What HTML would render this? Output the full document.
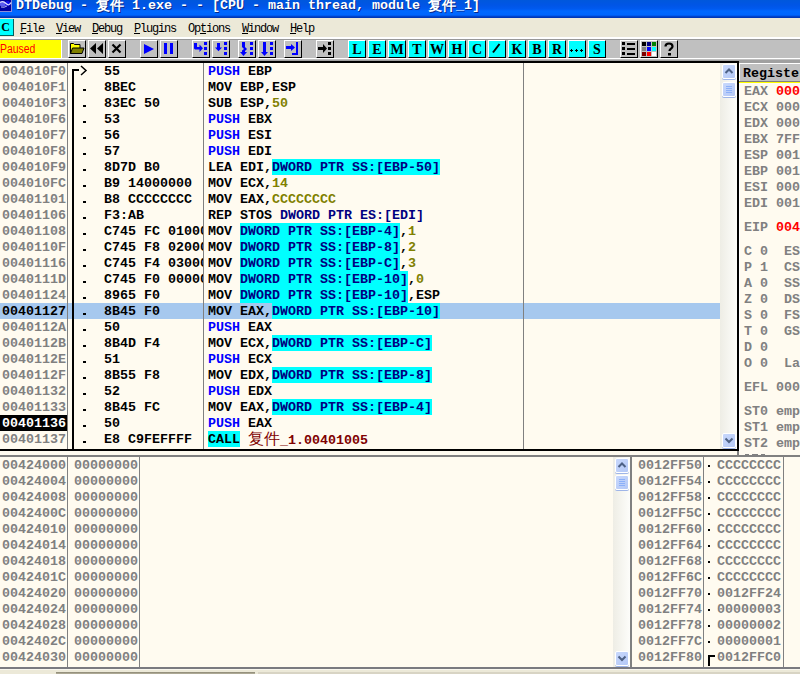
<!DOCTYPE html><html><head><meta charset="utf-8"><style>
*{margin:0;padding:0;box-sizing:border-box}
html,body{width:800px;height:674px;overflow:hidden;background:#ECE9D8;position:relative}
body div{position:absolute}
.m{font-family:"Liberation Mono",monospace;font-weight:bold;font-size:13.333px;line-height:18px;white-space:pre;height:16px}
.t{font-family:"Liberation Mono",monospace;font-weight:bold;font-size:13.333px;line-height:16px;white-space:pre;color:#fff;text-shadow:1px 1px 0 #0A2A8A}
.mn{font-family:"Liberation Mono",monospace;font-size:12px;letter-spacing:-1.2px;line-height:18px;white-space:pre;color:#000}
.btn{width:18px;height:18px;background:#C0C0C0;border-left:1px solid #fff;border-top:1px solid #fff;border-right:1px solid #000;border-bottom:1px solid #000}
.cb{width:18px;height:18px;background:#00FFFF;border-left:1px solid #fff;border-top:1px solid #fff;border-right:1px solid #000;border-bottom:1px solid #000;font-family:"Liberation Serif",serif;font-weight:bold;font-size:13px;line-height:16px;text-align:center;color:#000}
.g{color:#808080}
.k{color:#000}
.b{color:#0000FF}
.o{color:#808000}
.n{color:#000080}
.c{color:#000080;background:#00FFFF;display:inline-block;height:16px;vertical-align:top}
.r{color:#800000}
</style></head><body>
<div style="left:0px;top:0px;width:800px;height:18px;background:linear-gradient(#0058DC 0px,#0055E6 5px,#005AF0 9px,#0068FF 11px,#0066FE 15px,#0050E0 16px,#0038B8 17px,#0038B8 18px)"></div>
<svg style="position:absolute;left:0;top:0" width="12" height="12" viewBox="0 0 12 12"><rect x="0" y="0" width="12" height="12" fill="#8C8CD8"/><rect x="0" y="0" width="11" height="11" fill="#0000A0"/><ellipse cx="3" cy="4" rx="3.5" ry="2.5" fill="#5A5AF0"/><ellipse cx="7.5" cy="3.5" rx="2.5" ry="2.5" fill="#1010E8"/><path d="M0 2.5q3-2 6 1t5-1" stroke="#E0E0FF" stroke-width="1.2" fill="none"/><path d="M1 7q3 1 6 -1" stroke="#B0B0F0" stroke-width="1" fill="none"/></svg>
<div class="t" style="left:16px;top:-2px;">DTDebug - </div>
<div class="t" style="left:96px;top:-2px;font-size:14px;letter-spacing:0px">复件</div>
<div class="t" style="left:124px;top:-2px;"> 1.exe - - [CPU - main thread, module </div>
<div class="t" style="left:428px;top:-2px;font-size:14px">复件</div>
<div class="t" style="left:456px;top:-2px;">_1]</div>
<div style="left:0px;top:18px;width:800px;height:19px;background:#ECE9D8"></div>
<div style="left:0px;top:19px;width:14px;height:17px;background:#00FFFF;border-right:1px solid #006060;border-bottom:1px solid #006060"></div>
<div style="left:-1px;top:19px;width:13px;height:16px;font-family:'Liberation Serif',serif;font-weight:bold;font-size:12px;line-height:16px;text-align:center;color:#000">C</div>
<div class="mn" style="left:20px;top:20px"><u>F</u>ile</div>
<div class="mn" style="left:56px;top:20px"><u>V</u>iew</div>
<div class="mn" style="left:92px;top:20px"><u>D</u>ebug</div>
<div class="mn" style="left:134px;top:20px"><u>P</u>lugins</div>
<div class="mn" style="left:188px;top:20px">Op<u>t</u>ions</div>
<div class="mn" style="left:242px;top:20px"><u>W</u>indow</div>
<div class="mn" style="left:290px;top:20px"><u>H</u>elp</div>
<div style="left:0px;top:37px;width:800px;height:2px;background:#fff"></div>
<div style="left:0px;top:39px;width:800px;height:22px;background:#C0C0C0;border-top:1px solid #989898"></div>
<div style="left:0px;top:58px;width:800px;height:1px;background:#fff"></div>
<div style="left:0px;top:60px;width:800px;height:1px;background:#A0A0A0"></div>
<div style="left:0px;top:40px;width:61px;height:18px;background:#FFFF00"></div>
<div style="left:0px;top:40px;height:18px;font-family:'Liberation Sans',sans-serif;font-size:12px;line-height:18px;color:#FF0000;white-space:pre;transform:scaleX(0.87);transform-origin:0 0">Paused</div>
<div style="left:61px;top:40px;width:1px;height:18px;background:#fff"></div>
<div class="btn" style="left:68px;top:40px"><div style="left:0;top:0"><svg width="16" height="16" viewBox="0 0 16 16"><path d="M1.5 12.5V2.5h3l1 1h5.5v4" fill="#FFFF00" stroke="#000"/><path d="M1.5 12.5l2-5.5h11.5l-2 5.5z" fill="#808000" stroke="#000"/></svg></div></div>
<div class="btn" style="left:88px;top:40px"><div style="left:0;top:0"><svg width="16" height="16" viewBox="0 0 16 16"><path d="M1 7.5l6-5.5v11z M8 7.5l6-5.5v11z" fill="#000"/></svg></div></div>
<div class="btn" style="left:108px;top:40px"><div style="left:0;top:0"><svg width="16" height="16" viewBox="0 0 16 16"><path d="M3.5 3.5l8 8M11.5 3.5l-8 8" stroke="#000" stroke-width="2.2"/></svg></div></div>
<div class="btn" style="left:140px;top:40px"><div style="left:0;top:0"><svg width="16" height="16" viewBox="0 0 16 16"><path d="M3 3v10l10-5z" fill="#0000FF"/></svg></div></div>
<div class="btn" style="left:160px;top:40px"><div style="left:0;top:0"><svg width="16" height="16" viewBox="0 0 16 16"><rect x="3" y="2" width="3" height="11" fill="#0000FF"/><rect x="9" y="2" width="3" height="11" fill="#0000FF"/></svg></div></div>
<div class="btn" style="left:192px;top:40px"><div style="left:0;top:0"><svg width="16" height="16" viewBox="0 0 16 16"><path d="M1 2h3v4h2.5v-2.5l3.5 3.8-3.5 3.7v-2.5h-4.5l-1-1z" fill="#0000FF"/><rect x="11" y="1" width="3" height="3" fill="#0000FF"/><rect x="11" y="6" width="3" height="3" fill="#0000FF"/><rect x="11" y="11" width="3" height="3" fill="#0000FF"/></svg></div></div>
<div class="btn" style="left:212px;top:40px"><div style="left:0;top:0"><svg width="16" height="16" viewBox="0 0 16 16"><path d="M4 2h3v4.5h2l-3.5 3.8-3.5-3.8h2z" fill="#0000FF"/><rect x="11" y="1" width="3" height="3" fill="#0000FF"/><rect x="11" y="6" width="3" height="3" fill="#0000FF"/><rect x="11" y="11" width="3" height="3" fill="#0000FF"/></svg></div></div>
<div class="btn" style="left:238px;top:40px"><div style="left:0;top:0"><svg width="16" height="16" viewBox="0 0 16 16"><path d="M3 1h3v5l2 2-2 2v1h2l-3.5 4-3.5-4h2v-1.5l2-1.5-2-2z" fill="#0000FF"/><rect x="11" y="1" width="3" height="3" fill="#0000FF"/><rect x="11" y="6" width="3" height="3" fill="#0000FF"/><rect x="11" y="11" width="3" height="3" fill="#0000FF"/></svg></div></div>
<div class="btn" style="left:258px;top:40px"><div style="left:0;top:0"><svg width="16" height="16" viewBox="0 0 16 16"><path d="M4 1h3v10h2l-3.5 4-3.5-4h2z" fill="#0000FF"/><rect x="11" y="1" width="3" height="3" fill="#0000FF"/><rect x="11" y="6" width="3" height="3" fill="#0000FF"/><rect x="11" y="11" width="3" height="3" fill="#0000FF"/></svg></div></div>
<div class="btn" style="left:284px;top:40px"><div style="left:0;top:0"><svg width="16" height="16" viewBox="0 0 16 16"><path d="M1 5h5v-2l4 3.5-4 3.5v-2h-5z" fill="#0000FF"/><path d="M12 1v12h-5" stroke="#0000FF" stroke-width="2" fill="none"/></svg></div></div>
<div class="btn" style="left:316px;top:40px"><div style="left:0;top:0"><svg width="16" height="16" viewBox="0 0 16 16"><path d="M1 6h5v-3l4 4.5-4 4.5v-3h-5z" fill="#000"/><rect x="11" y="1" width="3" height="3" fill="#000"/><rect x="11" y="6" width="3" height="3" fill="#000"/><rect x="11" y="11" width="3" height="3" fill="#000"/></svg></div></div>
<div class="cb" style="left:348px;top:40px;line-height:17px;font-size:14px">L</div>
<div class="cb" style="left:368px;top:40px;line-height:17px;font-size:14px">E</div>
<div class="cb" style="left:388px;top:40px;line-height:17px;font-size:14px">M</div>
<div class="cb" style="left:408px;top:40px;line-height:17px;font-size:14px">T</div>
<div class="cb" style="left:428px;top:40px;line-height:17px;font-size:14px">W</div>
<div class="cb" style="left:448px;top:40px;line-height:17px;font-size:14px">H</div>
<div class="cb" style="left:468px;top:40px;line-height:17px;font-size:14px">C</div>
<div class="cb" style="left:488px;top:40px"><svg style="position:absolute;left:0;top:0" width="16" height="16" viewBox="0 0 16 16"><path d="M10.5 3L4 11.5" stroke="#000" stroke-width="2"/></svg></div>
<div class="cb" style="left:508px;top:40px;line-height:17px;font-size:14px">K</div>
<div class="cb" style="left:528px;top:40px;line-height:17px;font-size:14px">B</div>
<div class="cb" style="left:548px;top:40px;line-height:17px;font-size:14px">R</div>
<div class="cb" style="left:568px;top:40px"><svg style="position:absolute;left:0;top:0" width="16" height="16" viewBox="0 0 16 16"><path d="M1 9.5h3M2.5 8v3M6 9.5h3M7.5 8v3M11 9.5h3M12.5 8v3" stroke="#000" stroke-width="1"/></svg></div>
<div class="cb" style="left:588px;top:40px;line-height:17px;font-size:14px">S</div>
<div class="btn" style="left:620px;top:40px"><div style="left:0;top:0"><svg width="16" height="16" viewBox="0 0 16 16"><rect x="1" y="1" width="3" height="3"/><rect x="1" y="6" width="3" height="3"/><rect x="1" y="11" width="3" height="3"/><rect x="6" y="2" width="8" height="2"/><rect x="6" y="7" width="8" height="2"/><rect x="6" y="12" width="8" height="2"/></svg></div></div>
<div class="btn" style="left:640px;top:40px"><div style="left:0;top:0"><svg width="16" height="16" viewBox="0 0 16 16"><rect x="1" y="1" width="4" height="4" fill="#000"/><rect x="6" y="1" width="4" height="4" fill="#000080"/><rect x="11" y="1" width="4" height="4" fill="#008000"/><rect x="1" y="6" width="4" height="4" fill="#808080"/><rect x="6" y="6" width="4" height="4" fill="#0000FF"/><rect x="11" y="6" width="4" height="4" fill="#00FFFF"/><rect x="1" y="11" width="4" height="4" fill="#800000"/><rect x="6" y="11" width="4" height="4" fill="#FF0000"/><rect x="11" y="11" width="4" height="4" fill="#FFFFFF"/></svg></div></div>
<div class="btn" style="left:660px;top:40px"><div style="left:0;top:0"><svg width="16" height="16" viewBox="0 0 16 16"><path d="M4.5 5.5c0-2 1.5-3 3.5-3s3.5 1 3.5 3c0 2-3 2.2-3 4.5" stroke="#000" stroke-width="2.2" fill="none"/><rect x="7" y="12" width="3" height="2.5" fill="#000"/></svg></div></div>
<div style="left:0px;top:61px;width:739px;height:2px;background:#000"></div>
<div style="left:0px;top:63px;width:720px;height:386px;background:#FFFBF0"></div>
<div style="left:737px;top:61px;width:2px;height:390px;background:#000"></div>
<div style="left:0px;top:449px;width:739px;height:2px;background:#000"></div>
<div class="m" style="left:2px;top:63px;color:#808080">004010F0</div>
<div class="m" style="left:104px;top:63px;width:99px;overflow:hidden;color:#000">55</div>
<div class="m" style="left:208px;top:63px;color:#000"><span class="b">PUSH</span> EBP</div>
<div class="m" style="left:2px;top:79px;color:#808080">004010F1</div>
<div style="left:83px;top:89px;width:3px;height:2px;background:#000"></div>
<div class="m" style="left:104px;top:79px;width:99px;overflow:hidden;color:#000">8BEC</div>
<div class="m" style="left:208px;top:79px;color:#000">MOV EBP,ESP</div>
<div class="m" style="left:2px;top:95px;color:#808080">004010F3</div>
<div style="left:83px;top:105px;width:3px;height:2px;background:#000"></div>
<div class="m" style="left:104px;top:95px;width:99px;overflow:hidden;color:#000">83EC 50</div>
<div class="m" style="left:208px;top:95px;color:#000">SUB ESP,<span class="o">50</span></div>
<div class="m" style="left:2px;top:111px;color:#808080">004010F6</div>
<div style="left:83px;top:121px;width:3px;height:2px;background:#000"></div>
<div class="m" style="left:104px;top:111px;width:99px;overflow:hidden;color:#000">53</div>
<div class="m" style="left:208px;top:111px;color:#000"><span class="b">PUSH</span> EBX</div>
<div class="m" style="left:2px;top:127px;color:#808080">004010F7</div>
<div style="left:83px;top:137px;width:3px;height:2px;background:#000"></div>
<div class="m" style="left:104px;top:127px;width:99px;overflow:hidden;color:#000">56</div>
<div class="m" style="left:208px;top:127px;color:#000"><span class="b">PUSH</span> ESI</div>
<div class="m" style="left:2px;top:143px;color:#808080">004010F8</div>
<div style="left:83px;top:153px;width:3px;height:2px;background:#000"></div>
<div class="m" style="left:104px;top:143px;width:99px;overflow:hidden;color:#000">57</div>
<div class="m" style="left:208px;top:143px;color:#000"><span class="b">PUSH</span> EDI</div>
<div class="m" style="left:2px;top:159px;color:#808080">004010F9</div>
<div style="left:83px;top:169px;width:3px;height:2px;background:#000"></div>
<div class="m" style="left:104px;top:159px;width:99px;overflow:hidden;color:#000">8D7D B0</div>
<div class="m" style="left:208px;top:159px;color:#000">LEA EDI,<span class="c">DWORD PTR SS:[EBP-50]</span></div>
<div class="m" style="left:2px;top:175px;color:#808080">004010FC</div>
<div style="left:83px;top:185px;width:3px;height:2px;background:#000"></div>
<div class="m" style="left:104px;top:175px;width:99px;overflow:hidden;color:#000">B9 14000000</div>
<div class="m" style="left:208px;top:175px;color:#000">MOV ECX,<span class="o">14</span></div>
<div class="m" style="left:2px;top:191px;color:#808080">00401101</div>
<div style="left:83px;top:201px;width:3px;height:2px;background:#000"></div>
<div class="m" style="left:104px;top:191px;width:99px;overflow:hidden;color:#000">B8 CCCCCCCC</div>
<div class="m" style="left:208px;top:191px;color:#000">MOV EAX,<span class="o">CCCCCCCC</span></div>
<div class="m" style="left:2px;top:207px;color:#808080">00401106</div>
<div style="left:83px;top:217px;width:3px;height:2px;background:#000"></div>
<div class="m" style="left:104px;top:207px;width:99px;overflow:hidden;color:#000">F3:AB</div>
<div class="m" style="left:208px;top:207px;color:#000">REP STOS <span class="n">DWORD PTR ES:[EDI]</span></div>
<div class="m" style="left:2px;top:223px;color:#808080">00401108</div>
<div style="left:83px;top:233px;width:3px;height:2px;background:#000"></div>
<div class="m" style="left:104px;top:223px;width:99px;overflow:hidden;color:#000">C745 FC 01000000</div>
<div class="m" style="left:208px;top:223px;color:#000">MOV <span class="c">DWORD PTR SS:[EBP-4]</span>,<span class="o">1</span></div>
<div class="m" style="left:2px;top:239px;color:#808080">0040110F</div>
<div style="left:83px;top:249px;width:3px;height:2px;background:#000"></div>
<div class="m" style="left:104px;top:239px;width:99px;overflow:hidden;color:#000">C745 F8 02000000</div>
<div class="m" style="left:208px;top:239px;color:#000">MOV <span class="c">DWORD PTR SS:[EBP-8]</span>,<span class="o">2</span></div>
<div class="m" style="left:2px;top:255px;color:#808080">00401116</div>
<div style="left:83px;top:265px;width:3px;height:2px;background:#000"></div>
<div class="m" style="left:104px;top:255px;width:99px;overflow:hidden;color:#000">C745 F4 03000000</div>
<div class="m" style="left:208px;top:255px;color:#000">MOV <span class="c">DWORD PTR SS:[EBP-C]</span>,<span class="o">3</span></div>
<div class="m" style="left:2px;top:271px;color:#808080">0040111D</div>
<div style="left:83px;top:281px;width:3px;height:2px;background:#000"></div>
<div class="m" style="left:104px;top:271px;width:99px;overflow:hidden;color:#000">C745 F0 00000000</div>
<div class="m" style="left:208px;top:271px;color:#000">MOV <span class="c">DWORD PTR SS:[EBP-10]</span>,<span class="o">0</span></div>
<div class="m" style="left:2px;top:287px;color:#808080">00401124</div>
<div style="left:83px;top:297px;width:3px;height:2px;background:#000"></div>
<div class="m" style="left:104px;top:287px;width:99px;overflow:hidden;color:#000">8965 F0</div>
<div class="m" style="left:208px;top:287px;color:#000">MOV <span class="c">DWORD PTR SS:[EBP-10]</span>,ESP</div>
<div style="left:0px;top:303px;width:720px;height:16px;background:#A6C8EE"></div>
<div class="m" style="left:2px;top:303px;color:#000">00401127</div>
<div style="left:83px;top:313px;width:3px;height:2px;background:#000"></div>
<div class="m" style="left:104px;top:303px;width:99px;overflow:hidden;color:#000">8B45 F0</div>
<div class="m" style="left:208px;top:303px;color:#000">MOV EAX,<span class="c">DWORD PTR SS:[EBP-10]</span></div>
<div class="m" style="left:2px;top:319px;color:#808080">0040112A</div>
<div style="left:83px;top:329px;width:3px;height:2px;background:#000"></div>
<div class="m" style="left:104px;top:319px;width:99px;overflow:hidden;color:#000">50</div>
<div class="m" style="left:208px;top:319px;color:#000"><span class="b">PUSH</span> EAX</div>
<div class="m" style="left:2px;top:335px;color:#808080">0040112B</div>
<div style="left:83px;top:345px;width:3px;height:2px;background:#000"></div>
<div class="m" style="left:104px;top:335px;width:99px;overflow:hidden;color:#000">8B4D F4</div>
<div class="m" style="left:208px;top:335px;color:#000">MOV ECX,<span class="c">DWORD PTR SS:[EBP-C]</span></div>
<div class="m" style="left:2px;top:351px;color:#808080">0040112E</div>
<div style="left:83px;top:361px;width:3px;height:2px;background:#000"></div>
<div class="m" style="left:104px;top:351px;width:99px;overflow:hidden;color:#000">51</div>
<div class="m" style="left:208px;top:351px;color:#000"><span class="b">PUSH</span> ECX</div>
<div class="m" style="left:2px;top:367px;color:#808080">0040112F</div>
<div style="left:83px;top:377px;width:3px;height:2px;background:#000"></div>
<div class="m" style="left:104px;top:367px;width:99px;overflow:hidden;color:#000">8B55 F8</div>
<div class="m" style="left:208px;top:367px;color:#000">MOV EDX,<span class="c">DWORD PTR SS:[EBP-8]</span></div>
<div class="m" style="left:2px;top:383px;color:#808080">00401132</div>
<div style="left:83px;top:393px;width:3px;height:2px;background:#000"></div>
<div class="m" style="left:104px;top:383px;width:99px;overflow:hidden;color:#000">52</div>
<div class="m" style="left:208px;top:383px;color:#000"><span class="b">PUSH</span> EDX</div>
<div class="m" style="left:2px;top:399px;color:#808080">00401133</div>
<div style="left:83px;top:409px;width:3px;height:2px;background:#000"></div>
<div class="m" style="left:104px;top:399px;width:99px;overflow:hidden;color:#000">8B45 FC</div>
<div class="m" style="left:208px;top:399px;color:#000">MOV EAX,<span class="c">DWORD PTR SS:[EBP-4]</span></div>
<div style="left:0px;top:415px;width:67px;height:16px;background:#000"></div>
<div class="m" style="left:2px;top:415px;color:#fff">00401136</div>
<div style="left:83px;top:425px;width:3px;height:2px;background:#000"></div>
<div class="m" style="left:104px;top:415px;width:99px;overflow:hidden;color:#000">50</div>
<div class="m" style="left:208px;top:415px;color:#000"><span class="b">PUSH</span> EAX</div>
<div class="m" style="left:2px;top:431px;color:#808080">00401137</div>
<div style="left:83px;top:441px;width:3px;height:2px;background:#000"></div>
<div class="m" style="left:104px;top:431px;width:99px;overflow:hidden;color:#000">E8 C9FEFFFF</div>
<div class="m" style="left:208px;top:431px;color:#000"><span class="c" style="color:#000">CALL</span> <span class="r"><span style="font-size:16px;font-weight:normal">复件</span>_1.00401005</span></div>
<div style="left:72px;top:69px;width:2px;height:380px;background:#000"></div>
<div style="left:72px;top:69px;width:7px;height:2px;background:#000"></div>
<svg style="position:absolute;left:80px;top:65px" width="8" height="11" viewBox="0 0 8 11"><path d="M1 1l5 4.5-5 4.5" stroke="#000" stroke-width="1.5" fill="none"/></svg>
<div style="left:67px;top:63px;width:1px;height:386px;background:#808080"></div>
<div style="left:203px;top:63px;width:1px;height:386px;background:#808080"></div>
<div style="left:523px;top:63px;width:1px;height:386px;background:#808080"></div>
<div style="left:720px;top:63px;width:17px;height:386px;background:linear-gradient(90deg,#EEEDE5,#FDFDFA)"></div>
<div style="left:722px;top:64px;width:14px;height:15px;border-radius:2px;background:linear-gradient(135deg,#C8D8FC,#B4C8F6);border:1px solid #fff;box-shadow:0 1px 0 #9FB5E8"></div>
<svg style="position:absolute;left:722px;top:64px" width="14" height="15" viewBox="0 0 14 15"><path d="M3.5 9l3.5-3.5 3.5 3.5" stroke="#4D6185" stroke-width="2" fill="none"/></svg>
<div style="left:722px;top:82px;width:14px;height:15px;border-radius:2px;background:linear-gradient(135deg,#C8D8FC,#B4C8F6);border:1px solid #fff;box-shadow:0 1px 0 #9FB5E8"></div>
<svg style="position:absolute;left:722px;top:82px" width="14" height="15" viewBox="0 0 14 15"><path d="M4 4.5h6M4 6.5h6M4 8.5h6M4 10.5h6" stroke="#8CB0F8" stroke-width="1" fill="none"/></svg>
<div style="left:722px;top:433px;width:14px;height:15px;border-radius:2px;background:linear-gradient(135deg,#C8D8FC,#B4C8F6);border:1px solid #fff;box-shadow:0 1px 0 #9FB5E8"></div>
<svg style="position:absolute;left:722px;top:433px" width="14" height="15" viewBox="0 0 14 15"><path d="M3.5 5.5l3.5 3.5 3.5-3.5" stroke="#4D6185" stroke-width="2" fill="none"/></svg>
<div style="left:739px;top:61px;width:61px;height:2px;background:#A0A0A0"></div>
<div style="left:739px;top:63px;width:61px;height:392px;background:#FFFBF0"></div>
<div style="left:739px;top:63px;width:61px;height:1px;background:#fff"></div>
<div style="left:739px;top:63px;width:1px;height:392px;background:#fff"></div>
<div style="left:740px;top:64px;width:60px;height:17px;background:#C0C0C0"></div>
<div style="left:739px;top:81px;width:61px;height:1px;background:#808080"></div>
<div style="left:739px;top:82px;width:61px;height:1px;background:#FFFF00"></div>
<div class="m" style="left:743px;top:64px;color:#000;line-height:19px">Registers (FPU)</div>
<div class="m" style="left:744px;top:83px;color:#808080">EAX</div>
<div class="m" style="left:776px;top:83px;color:#FF0000">000</div>
<div class="m" style="left:744px;top:99px;color:#808080">ECX</div>
<div class="m" style="left:776px;top:99px;color:#808080">000</div>
<div class="m" style="left:744px;top:115px;color:#808080">EDX</div>
<div class="m" style="left:776px;top:115px;color:#808080">000</div>
<div class="m" style="left:744px;top:131px;color:#808080">EBX</div>
<div class="m" style="left:776px;top:131px;color:#808080">7FF</div>
<div class="m" style="left:744px;top:147px;color:#808080">ESP</div>
<div class="m" style="left:776px;top:147px;color:#808080">001</div>
<div class="m" style="left:744px;top:163px;color:#808080">EBP</div>
<div class="m" style="left:776px;top:163px;color:#808080">001</div>
<div class="m" style="left:744px;top:179px;color:#808080">ESI</div>
<div class="m" style="left:776px;top:179px;color:#808080">000</div>
<div class="m" style="left:744px;top:195px;color:#808080">EDI</div>
<div class="m" style="left:776px;top:195px;color:#808080">001</div>
<div class="m" style="left:744px;top:219px;color:#808080">EIP</div>
<div class="m" style="left:776px;top:219px;color:#FF0000">004</div>
<div class="m" style="left:744px;top:243px;color:#808080">C 0  ES</div>
<div class="m" style="left:744px;top:259px;color:#808080">P 1  CS</div>
<div class="m" style="left:744px;top:275px;color:#808080">A 0  SS</div>
<div class="m" style="left:744px;top:291px;color:#808080">Z 0  DS</div>
<div class="m" style="left:744px;top:307px;color:#808080">S 0  FS</div>
<div class="m" style="left:744px;top:323px;color:#808080">T 0  GS</div>
<div class="m" style="left:744px;top:339px;color:#808080">D 0</div>
<div class="m" style="left:744px;top:355px;color:#808080">O 0  La</div>
<div class="m" style="left:744px;top:379px;color:#808080">EFL 000</div>
<div class="m" style="left:744px;top:403px;color:#808080">ST0 emp</div>
<div class="m" style="left:744px;top:419px;color:#808080">ST1 emp</div>
<div class="m" style="left:744px;top:435px;color:#808080">ST2 emp</div>
<div class="m" style="left:744px;top:451px;color:#808080">...</div>
<div style="left:0px;top:451px;width:800px;height:4px;background:#FFFBF0"></div>
<div style="left:0px;top:455px;width:800px;height:2px;background:#808080"></div>
<div style="left:737px;top:451px;width:2px;height:4px;background:#808080"></div>
<div style="left:745px;top:454px;width:4px;height:1px;background:#808080"></div>
<div style="left:752px;top:454px;width:6px;height:1px;background:#808080"></div>
<div style="left:761px;top:454px;width:4px;height:1px;background:#808080"></div>
<div style="left:0px;top:457px;width:614px;height:210px;background:#FFFBF0"></div>
<div class="m" style="left:2px;top:457px;color:#808080">00424000</div>
<div class="m" style="left:74px;top:457px;color:#808080">00000000</div>
<div class="m" style="left:2px;top:473px;color:#808080">00424004</div>
<div class="m" style="left:74px;top:473px;color:#808080">00000000</div>
<div class="m" style="left:2px;top:489px;color:#808080">00424008</div>
<div class="m" style="left:74px;top:489px;color:#808080">00000000</div>
<div class="m" style="left:2px;top:505px;color:#808080">0042400C</div>
<div class="m" style="left:74px;top:505px;color:#808080">00000000</div>
<div class="m" style="left:2px;top:521px;color:#808080">00424010</div>
<div class="m" style="left:74px;top:521px;color:#808080">00000000</div>
<div class="m" style="left:2px;top:537px;color:#808080">00424014</div>
<div class="m" style="left:74px;top:537px;color:#808080">00000000</div>
<div class="m" style="left:2px;top:553px;color:#808080">00424018</div>
<div class="m" style="left:74px;top:553px;color:#808080">00000000</div>
<div class="m" style="left:2px;top:569px;color:#808080">0042401C</div>
<div class="m" style="left:74px;top:569px;color:#808080">00000000</div>
<div class="m" style="left:2px;top:585px;color:#808080">00424020</div>
<div class="m" style="left:74px;top:585px;color:#808080">00000000</div>
<div class="m" style="left:2px;top:601px;color:#808080">00424024</div>
<div class="m" style="left:74px;top:601px;color:#808080">00000000</div>
<div class="m" style="left:2px;top:617px;color:#808080">00424028</div>
<div class="m" style="left:74px;top:617px;color:#808080">00000000</div>
<div class="m" style="left:2px;top:633px;color:#808080">0042402C</div>
<div class="m" style="left:74px;top:633px;color:#808080">00000000</div>
<div class="m" style="left:2px;top:649px;color:#808080">00424030</div>
<div class="m" style="left:74px;top:649px;color:#808080">00000000</div>
<div style="left:67px;top:457px;width:1px;height:210px;background:#808080"></div>
<div style="left:139px;top:457px;width:1px;height:210px;background:#808080"></div>
<div style="left:613px;top:457px;width:17px;height:210px;background:linear-gradient(90deg,#EEEDE5,#FDFDFA)"></div>
<div style="left:615px;top:458px;width:14px;height:15px;border-radius:2px;background:linear-gradient(135deg,#C8D8FC,#B4C8F6);border:1px solid #fff;box-shadow:0 1px 0 #9FB5E8"></div>
<svg style="position:absolute;left:615px;top:458px" width="14" height="15" viewBox="0 0 14 15"><path d="M3.5 9l3.5-3.5 3.5 3.5" stroke="#4D6185" stroke-width="2" fill="none"/></svg>
<div style="left:615px;top:475px;width:14px;height:15px;border-radius:2px;background:linear-gradient(135deg,#C8D8FC,#B4C8F6);border:1px solid #fff;box-shadow:0 1px 0 #9FB5E8"></div>
<svg style="position:absolute;left:615px;top:475px" width="14" height="15" viewBox="0 0 14 15"><path d="M4 4.5h6M4 6.5h6M4 8.5h6M4 10.5h6" stroke="#8CB0F8" stroke-width="1" fill="none"/></svg>
<div style="left:615px;top:651px;width:14px;height:15px;border-radius:2px;background:linear-gradient(135deg,#C8D8FC,#B4C8F6);border:1px solid #fff;box-shadow:0 1px 0 #9FB5E8"></div>
<svg style="position:absolute;left:615px;top:651px" width="14" height="15" viewBox="0 0 14 15"><path d="M3.5 5.5l3.5 3.5 3.5-3.5" stroke="#4D6185" stroke-width="2" fill="none"/></svg>
<div style="left:630px;top:455px;width:2px;height:213px;background:#808080"></div>
<div style="left:632px;top:457px;width:168px;height:210px;background:#FFFBF0"></div>
<div class="m" style="left:638px;top:457px;color:#808080">0012FF50</div>
<div class="m" style="left:717px;top:457px;color:#808080">CCCCCCCC</div>
<div style="left:708px;top:465px;width:2px;height:2px;background:#000"></div>
<div class="m" style="left:638px;top:473px;color:#808080">0012FF54</div>
<div class="m" style="left:717px;top:473px;color:#808080">CCCCCCCC</div>
<div style="left:708px;top:481px;width:2px;height:2px;background:#000"></div>
<div class="m" style="left:638px;top:489px;color:#808080">0012FF58</div>
<div class="m" style="left:717px;top:489px;color:#808080">CCCCCCCC</div>
<div style="left:708px;top:497px;width:2px;height:2px;background:#000"></div>
<div class="m" style="left:638px;top:505px;color:#808080">0012FF5C</div>
<div class="m" style="left:717px;top:505px;color:#808080">CCCCCCCC</div>
<div style="left:708px;top:513px;width:2px;height:2px;background:#000"></div>
<div class="m" style="left:638px;top:521px;color:#808080">0012FF60</div>
<div class="m" style="left:717px;top:521px;color:#808080">CCCCCCCC</div>
<div style="left:708px;top:529px;width:2px;height:2px;background:#000"></div>
<div class="m" style="left:638px;top:537px;color:#808080">0012FF64</div>
<div class="m" style="left:717px;top:537px;color:#808080">CCCCCCCC</div>
<div style="left:708px;top:545px;width:2px;height:2px;background:#000"></div>
<div class="m" style="left:638px;top:553px;color:#808080">0012FF68</div>
<div class="m" style="left:717px;top:553px;color:#808080">CCCCCCCC</div>
<div style="left:708px;top:561px;width:2px;height:2px;background:#000"></div>
<div class="m" style="left:638px;top:569px;color:#808080">0012FF6C</div>
<div class="m" style="left:717px;top:569px;color:#808080">CCCCCCCC</div>
<div style="left:708px;top:577px;width:2px;height:2px;background:#000"></div>
<div class="m" style="left:638px;top:585px;color:#808080">0012FF70</div>
<div class="m" style="left:717px;top:585px;color:#808080">0012FF24</div>
<div style="left:708px;top:593px;width:2px;height:2px;background:#000"></div>
<div class="m" style="left:638px;top:601px;color:#808080">0012FF74</div>
<div class="m" style="left:717px;top:601px;color:#808080">00000003</div>
<div style="left:708px;top:609px;width:2px;height:2px;background:#000"></div>
<div class="m" style="left:638px;top:617px;color:#808080">0012FF78</div>
<div class="m" style="left:717px;top:617px;color:#808080">00000002</div>
<div style="left:708px;top:625px;width:2px;height:2px;background:#000"></div>
<div class="m" style="left:638px;top:633px;color:#808080">0012FF7C</div>
<div class="m" style="left:717px;top:633px;color:#808080">00000001</div>
<div style="left:708px;top:641px;width:2px;height:2px;background:#000"></div>
<div class="m" style="left:638px;top:649px;color:#808080">0012FF80</div>
<div class="m" style="left:717px;top:649px;color:#808080">0012FFC0</div>
<div style="left:708px;top:655px;width:2px;height:11px;background:#000"></div>
<div style="left:708px;top:655px;width:7px;height:2px;background:#000"></div>
<div style="left:703px;top:457px;width:1px;height:210px;background:#808080"></div>
<div style="left:783px;top:457px;width:1px;height:210px;background:#808080"></div>
<div style="left:0px;top:667px;width:800px;height:2px;background:#7A7A80"></div>
<div style="left:0px;top:669px;width:800px;height:5px;background:#ECE9D8"></div>
<div style="left:0px;top:669px;width:800px;height:1px;background:#F8F6EE"></div>
<div style="left:56px;top:672px;width:199px;height:2px;background:linear-gradient(#8A8672,#B8B4A0)"></div>
<div style="left:258px;top:672px;width:542px;height:2px;background:#D8D4C4"></div>
</body></html>
